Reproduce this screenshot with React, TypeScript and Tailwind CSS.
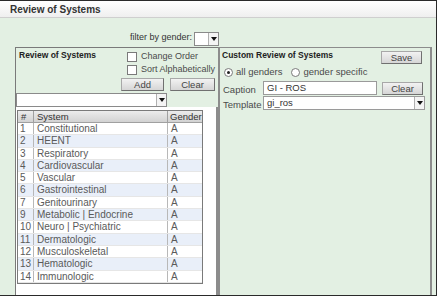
import React from "react";

const rows: [string, string][] = [
  ["1", "Constitutional"],
  ["2", "HEENT"],
  ["3", "Respiratory"],
  ["4", "Cardiovascular"],
  ["5", "Vascular"],
  ["6", "Gastrointestinal"],
  ["7", "Genitourinary"],
  ["9", "Metabolic | Endocrine"],
  ["10", "Neuro | Psychiatric"],
  ["11", "Dermatologic"],
  ["12", "Musculoskeletal"],
  ["13", "Hematologic"],
  ["14", "Immunologic"],
];

function Btn({ label, className }: { label: string; className: string }) {
  return (
    <div
      className={`flex items-center justify-center h-[13px] border border-[#a8a8a8] border-b-[#707070] border-r-[#707070] bg-gradient-to-b from-[#f2f2f2] to-[#d6d6d6] text-[9.5px] text-[#444] leading-none ${className}`}
    >
      {label}
    </div>
  );
}

function Arrow() {
  return (
    <div className="w-[10px] h-full flex items-center justify-center bg-[#f4f4f4] border-l border-[#b0b0b0]">
      <svg width="6" height="4" viewBox="0 0 6 4">
        <path d="M0 0H6L3 4Z" fill="#111" />
      </svg>
    </div>
  );
}

function Check({ label }: { label: string }) {
  return (
    <div className="flex items-center h-[13px] gap-[4px] whitespace-nowrap">
      <div className="w-[10px] h-[10px] bg-white border border-[#7a7a7a]" />
      <span>{label}</span>
    </div>
  );
}

function Radio({ label, on }: { label: string; on?: boolean }) {
  return (
    <div className="flex items-center gap-[3px] whitespace-nowrap">
      <div className="w-[9px] h-[9px] rounded-full bg-white border border-[#7a7a7a] flex items-center justify-center">
        {on && <div className="w-[3px] h-[3px] rounded-full bg-[#222]" />}
      </div>
      <span>{label}</span>
    </div>
  );
}

export default function App() {
  return (
    <div
      className="w-[437px] h-[296px] overflow-hidden flex flex-col bg-[#e3f0e3] border-t border-r border-b border-[#2a2a2a] text-[9.5px] text-[#4a4a4a]"
      style={{ fontFamily: '"Liberation Sans", Arial, sans-serif' }}
    >
      <div className="h-[17px] shrink-0 flex items-center pl-[10px] bg-gradient-to-b from-white to-[#efefef] border-b border-[#cfcfcf] text-[10px] font-bold text-[#333]">
        Review of Systems
      </div>

      <div className="h-[29px] shrink-0 w-[219px] flex items-end justify-end pb-[1px]">
        <span className="text-[#333] text-[9px] mr-[2px] mb-[2px]">filter by gender:</span>
        <div className="w-[25px] h-[14px] flex bg-white border border-[#8a8a8a]">
          <div className="flex-1" />
          <Arrow />
        </div>
      </div>

      <div className="flex-1 flex pl-[15px] pr-[4px] min-h-0">
        <div className="w-[203px] flex flex-col border-t border-l border-[#7a7a7a]">
          <div className="h-[59px] shrink-0 relative">
            <div className="absolute left-[3px] top-[1px] font-bold text-[8.5px] text-[#222] whitespace-nowrap">Review of Systems</div>
            <div className="absolute left-[111px] top-[2px] flex flex-col text-[9px]">
              <Check label="Change Order" />
              <Check label="Sort Alphabetically" />
            </div>
            <Btn label="Add" className="absolute left-[105px] top-[30px] w-[43px]" />
            <Btn label="Clear" className="absolute left-[154px] top-[30px] w-[45px]" />
            <div className="absolute left-0 top-[45px] w-[151px] h-[14px] flex bg-white border border-[#8a8a8a]">
              <div className="flex-1" />
              <Arrow />
            </div>
          </div>
          <div className="flex-1 bg-white border-r-2 border-[#8c8c8c] pt-[3px] pl-[1px]">
            <div className="w-[186px] border border-[#7a7a7a] text-[10px] text-[#5a5a5a]">
              <div className="flex h-[12px] bg-gradient-to-b from-[#ececec] to-[#d2d2d2] border-b border-[#a0a0a0] text-[9.5px] text-[#333] leading-[11px]">
                <div className="w-[16px] pl-[3px] border-r border-[#a0a0a0]">#</div>
                <div className="w-[134px] pl-[3px] border-r border-[#a0a0a0]">System</div>
                <div className="flex-1 pl-[2px]">Gender</div>
              </div>
              {rows.map(([n, s], i) => (
                <div
                  key={n}
                  className={`flex h-[12.3px] leading-[11px] border-b border-[#e6e6e6] ${i % 2 === 1 ? "bg-[#e9eff9]" : "bg-white"}`}
                >
                  <div className="w-[16px] pl-[2px] border-r border-[#b8b8b8]">{n}</div>
                  <div className="w-[134px] pl-[3px] border-r border-[#b8b8b8]">{s}</div>
                  <div className="flex-1 pl-[3px]">A</div>
                </div>
              ))}
            </div>
          </div>
        </div>

        <div className="flex-1 relative border-t border-l-2 border-r-2 border-[#8c8c8c]">
          <div className="absolute left-[2px] top-[1px] font-bold text-[8.5px] text-[#222] whitespace-nowrap">Custom Review of Systems</div>
          <Btn label="Save" className="absolute left-[161px] top-[3px] w-[41px]" />
          <div className="absolute left-[4px] top-[17px] flex gap-[9px]">
            <Radio label="all genders" on />
            <Radio label="gender specific" />
          </div>
          <div className="absolute left-[3px] top-[35px]">Caption</div>
          <div className="absolute left-[43px] top-[33px] w-[114px] h-[14px] bg-white border border-[#9a9a9a] pl-[3px] leading-[12px] text-[#333]">
            GI - ROS
          </div>
          <Btn label="Clear" className="absolute left-[162px] top-[34px] w-[41px]" />
          <div className="absolute left-[3px] top-[50px]">Template</div>
          <div className="absolute left-[43px] top-[48px] w-[162px] h-[14px] flex bg-white border border-[#9a9a9a] text-[#333]">
            <div className="flex-1 pl-[3px] leading-[12px]">gi_ros</div>
            <Arrow />
          </div>
        </div>
      </div>
    </div>
  );
}
